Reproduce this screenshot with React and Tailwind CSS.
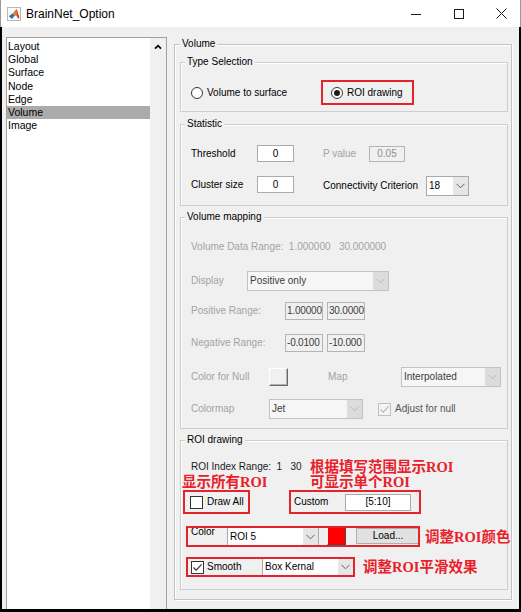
import React from 'react';

const pages = ['Layout', 'Global', 'Surface', 'Node', 'Edge', 'Volume', 'Image'];

// red hand-written notes that sit next to the ROI controls
const note = "font-['Liberation_Serif','Noto_Sans_CJK_SC',serif] font-bold text-[14.5px] leading-[16px] text-[#e8202a] whitespace-nowrap";

function MatlabIcon() {
  return (
    <svg width="14" height="14" viewBox="0 0 14 14">
      <rect x="0.5" y="0.5" width="13" height="13" fill="#fbfbfb" stroke="#b8b8b8" />
      <polygon points="1.8,9.2 5.8,6.2 8,8.2 5,12" fill="#2f6fb8" />
      <polygon points="5.8,6.2 9.6,1.8 12.4,11.2 8,8.2" fill="#ec7a1e" />
      <polygon points="9.6,1.8 12.4,11.2 10.6,11.2" fill="#c2352a" />
    </svg>
  );
}

function Chevron({ color = '#5c5c5c' }) {
  return (
    <svg width="9" height="6" viewBox="0 0 9 6">
      <path d="M0.5 0.8 L4.5 4.8 L8.5 0.8" fill="none" stroke={color} strokeWidth="1" />
    </svg>
  );
}

function Group({ title, className = '', children }) {
  return (
    <div className={`relative shrink-0 border border-[#cdcdcd] shadow-[inset_1px_1px_0_#ffffff] ${className}`}>
      <span className="absolute -top-[7px] left-[4px] px-[2px] bg-[#f0f0f0] leading-[12px] text-black">
        {title}
      </span>
      {children}
    </div>
  );
}

function Select({ value, disabled, className = '' }) {
  return (
    <div
      className={`flex shrink-0 border ${
        disabled ? 'border-[#c2c2c2] bg-[#f6f6f6] text-[#3c3c3c]' : 'border-[#a9a9a9] bg-white text-black'
      } ${className}`}
    >
      <span className="flex-1 flex items-center pl-[2px] whitespace-nowrap overflow-hidden">{value}</span>
      <span
        className={`w-[15px] flex items-center justify-center ${disabled ? 'bg-[#dcdcdc]' : 'bg-[#e6e6e6]'}`}
      >
        <Chevron color={disabled ? '#b8b8b8' : '#606060'} />
      </span>
    </div>
  );
}

function Edit({ value, disabled, left, className = '' }) {
  return (
    <div
      className={`flex items-center shrink-0 whitespace-nowrap border ${
        disabled ? 'border-[#b4b4b4] bg-[#f0f0f0]' : 'border-[#ababab] bg-white text-black'
      } ${left ? 'justify-start pl-[1px] tracking-[-0.2px]' : 'justify-center'} ${className}`}
    >
      {value}
    </div>
  );
}

function Radio({ on }) {
  return (
    <span className="w-[12px] h-[12px] shrink-0 rounded-full border border-[#333333] bg-white flex items-center justify-center">
      {on && <span className="w-[6px] h-[6px] rounded-full bg-[#1c1c1c]" />}
    </span>
  );
}

function Check({ on, disabled }) {
  return (
    <span
      className={`w-[13px] h-[13px] shrink-0 border flex items-center justify-center ${
        disabled ? 'border-[#c0c0c0] bg-[#f4f4f4]' : 'border-[#333333] bg-white'
      }`}
    >
      {on && (
        <svg width="11" height="11" viewBox="0 0 11 11">
          <path d="M1.5 5.5 L4.2 8.2 L9.6 2.4" fill="none" stroke={disabled ? '#b8b8b8' : '#333333'} strokeWidth="1.2" />
        </svg>
      )}
    </span>
  );
}

function TitleBar() {
  return (
    <div className="h-[27px] shrink-0 flex items-center bg-white border-x border-[#9a9a9a]">
      <span className="ml-[6px]">
        <MatlabIcon />
      </span>
      <span className="ml-[5px] text-[12px] text-black">BrainNet_Option</span>
      <span className="flex-1" />
      <svg width="10" height="10" viewBox="0 0 10 10">
        <path d="M0 5.5 H10" stroke="#1a1a1a" strokeWidth="1" />
      </svg>
      <svg className="ml-[33px]" width="10" height="10" viewBox="0 0 10 10">
        <rect x="0.5" y="0.5" width="9" height="9" fill="none" stroke="#1a1a1a" strokeWidth="1" />
      </svg>
      <svg className="ml-[32px] mr-[13px]" width="11" height="11" viewBox="0 0 11 11">
        <path d="M0.5 0.5 L10.5 10.5 M10.5 0.5 L0.5 10.5" stroke="#1a1a1a" strokeWidth="1" />
      </svg>
    </div>
  );
}

function PageList() {
  return (
    <div className="w-[161px] h-[600px] shrink-0 flex border border-[#a0a0a0] bg-white">
      <div className="w-[143px] pt-[2px]">
        {pages.map((p) => (
          <div
            key={p}
            className={`h-[13.2px] leading-[13.2px] pl-[1px] text-[10.5px] text-black ${
              p === 'Volume' ? 'bg-[#ababab]' : ''
            }`}
          >
            {p}
          </div>
        ))}
      </div>
      <div className="w-[16px] bg-[#f0f0f0]">
        <div className="h-[17px] flex items-center justify-center">
          <svg width="8" height="6" viewBox="0 0 8 6">
            <path d="M1 4.6 L4 1.6 L7 4.6" fill="none" stroke="#000" strokeWidth="1.7" />
          </svg>
        </div>
      </div>
    </div>
  );
}

export default function App() {
  return (
    <div className="w-[521px] h-[612px] flex flex-col overflow-hidden bg-white font-['Liberation_Sans',Arial,sans-serif] text-[10px] leading-[12px]">
      <TitleBar />

      <div className="flex-1 flex items-start overflow-hidden bg-[#f0f0f0] border-l-2 border-r-2 border-b-[3px] border-black pl-[4px] pt-[10px]">
        <PageList />

        {/* Volume settings */}
        <div className="relative ml-[7px] mt-[7px] w-[338px] h-[556px] shrink-0 flex flex-col pl-[5px] border border-[#c3c3c3] shadow-[inset_1px_1px_0_#ffffff,1px_1px_0_#ffffff]">
          <span className="absolute -top-[7px] left-[5px] px-[2px] bg-[#f0f0f0] leading-[12px] text-black">Volume</span>

          <Group title="Type Selection" className="mt-[17px] w-[328px] h-[50px]">
            <div className="mt-[17px] h-[25px] flex items-center pl-[10px]">
              <div className="w-[130px] flex items-center gap-[4px]">
                <Radio />
                <span>Volume to surface</span>
              </div>
              <div className="w-[93px] h-[25px] flex items-center gap-[4px] pl-[8px] border-2 border-[#e5232b]">
                <Radio on />
                <span>ROI drawing</span>
              </div>
            </div>
          </Group>

          <Group title="Statistic" className="mt-[12px] w-[328px] h-[82px]">
            <div className="mt-[20px] h-[17px] flex items-center pl-[10px]">
              <span className="w-[66px]">Threshold</span>
              <Edit value="0" className="w-[37px] h-[17px]" />
              <span className="ml-[29px] w-[46px] text-[#a3a3a3]">P value</span>
              <Edit value="0.05" disabled className="w-[36px] h-[16px] text-[#8f8f8f]" />
            </div>
            <div className="mt-[14px] h-[20px] flex items-start pl-[10px]">
              <span className="w-[66px] h-[17px] flex items-center">Cluster size</span>
              <Edit value="0" className="w-[37px] h-[17px]" />
              <span className="ml-[29px] w-[103px] h-[20px] flex items-center">Connectivity Criterion</span>
              <Select value="18" className="w-[43px] h-[20px]" />
            </div>
          </Group>

          <Group title="Volume mapping" className="mt-[11px] w-[328px] h-[212px]">
            <div className="mt-[23px] h-[12px] pl-[10px] whitespace-pre text-[#a3a3a3]">
              {'Volume Data Range:  1.000000   30.000000'}
            </div>
            <div className="mt-[18px] h-[20px] flex items-center pl-[10px]">
              <span className="w-[56px] text-[#a3a3a3]">Display</span>
              <Select value="Positive only" disabled className="w-[142px] h-[20px]" />
            </div>
            <div className="mt-[11px] h-[18px] flex items-center pl-[10px]">
              <span className="w-[94px] text-[#a3a3a3]">Positive Range:</span>
              <Edit value="1.00000" disabled left className="w-[38px] h-[18px] text-[#3c3c3c]" />
              <Edit value="30.0000" disabled left className="ml-[4px] w-[38px] h-[18px] text-[#3c3c3c]" />
            </div>
            <div className="mt-[14px] h-[18px] flex items-center pl-[10px]">
              <span className="w-[94px] text-[#a3a3a3]">Negative Range:</span>
              <Edit value="-0.0100" disabled left className="w-[38px] h-[18px] text-[#3c3c3c]" />
              <Edit value="-10.000" disabled left className="ml-[4px] w-[38px] h-[18px] text-[#3c3c3c]" />
            </div>
            <div className="mt-[15px] h-[20px] flex items-center pl-[10px]">
              <span className="w-[78px] text-[#a3a3a3]">Color for Null</span>
              <span className="w-[19px] h-[18px] shrink-0 bg-[#f0f0f0] border border-t-white border-l-white border-r-[#6b6b6b] border-b-[#6b6b6b] shadow-[inset_-1px_-1px_0_#b0b0b0]" />
              <span className="ml-[40px] w-[73px] text-[#a3a3a3]">Map</span>
              <Select value="Interpolated" disabled className="w-[100px] h-[20px]" />
            </div>
            <div className="mt-[12px] h-[20px] flex items-center pl-[10px]">
              <span className="w-[78px] text-[#a3a3a3]">Colormap</span>
              <Select value="Jet" disabled className="w-[94px] h-[20px]" />
              <span className="ml-[15px]">
                <Check on disabled />
              </span>
              <span className="ml-[4px] text-[#555555]">Adjust for null</span>
            </div>
          </Group>

          <Group title="ROI drawing" className="mt-[11px] w-[328px] h-[150px]">
            <div className="mt-[18px] h-[15px] flex items-center pl-[10px]">
              <span className="w-[119px] whitespace-pre text-[#1a1a1a]">{'ROI Index Range:  1   30'}</span>
              <span className={note}>根据填写范围显示ROI</span>
            </div>
            <div className="h-[16px] flex items-center pl-[1px]">
              <span className={`w-[128px] ${note}`}>显示所有ROI</span>
              <span className={note}>可显示单个ROI</span>
            </div>
            <div className="h-[24px] flex items-center">
              <div className="ml-[2px] w-[67px] h-[24px] flex items-center gap-[4px] pl-[5px] border-2 border-[#e5232b]">
                <Check />
                <span>Draw All</span>
              </div>
              <div className="ml-[39px] w-[132px] h-[24px] flex items-center pl-[3px] border-2 border-[#e5232b]">
                <span className="w-[51px]">Custom</span>
                <Edit value="[5:10]" className="w-[66px] h-[17px]" />
              </div>
            </div>
            <div className="mt-[12px] flex items-center">
              <div className="ml-[5px] w-[236px] h-[21px] flex items-start pl-[5px] outline-2 outline-[#e5232b] -outline-offset-2">
                <span className="w-[36px] h-[12px]">Color</span>
                <Select value="ROI 5" className="mt-[1px] w-[92px] h-[20px]" />
                <span className="ml-[8px] mt-[1px] w-[19px] h-[18px] shrink-0 bg-[#ff0000] border border-t-[#f4f4f4] border-l-[#f4f4f4] border-r-[#4a4a4a] border-b-[#4a4a4a]" />
                <span className="ml-[10px] mt-[2px] w-[64px] h-[16px] shrink-0 flex items-center justify-center bg-[#e1e1e1] border border-[#adadad]">
                  Load...
                </span>
              </div>
              <span className={`ml-[5px] ${note}`}>调整ROI颜色</span>
            </div>
            <div className="mt-[10px] flex items-center">
              <div className="ml-[5px] w-[169px] h-[20px] flex items-center pl-[5px] outline-2 outline-[#e5232b] -outline-offset-2">
                <Check on />
                <span className="ml-[3px] w-[55px]">Smooth</span>
                <Select value="Box Kernal" className="w-[92px] h-[19px]" />
              </div>
              <span className={`ml-[8px] ${note}`}>调整ROI平滑效果</span>
            </div>
          </Group>
        </div>
      </div>
    </div>
  );
}
